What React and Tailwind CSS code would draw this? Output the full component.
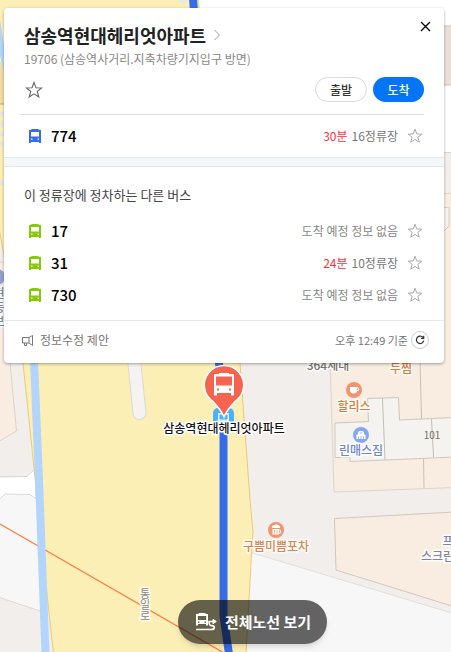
import React from 'react';

const otherBuses = [
  { number: '17' },
  { number: '31', minutes: '24분', stops: '10정류장' },
  { number: '730' },
];

function StarIcon({ className }) {
  return (
    <svg className={className} viewBox="0 0 16 16" fill="none" stroke="currentColor">
      <path
        strokeLinejoin="miter"
        d="M8 1.2l1.75 4.75 5.05.2-3.95 3.15 1.4 4.9L8 11.4l-4.25 2.8 1.4-4.9L1.2 6.15l5.05-.2z"
      />
    </svg>
  );
}

function BusIcon({ className }) {
  return (
    <svg className={className} viewBox="0 0 12 14" fill="currentColor">
      <path
        fillRule="evenodd"
        d="M2.5 0h7v.8h1.7c.4 0 .8.4.8.8V14H10v-1H2v1H0V1.6C0 1.2.4.8.8.8h1.7zM2 3v4.500h8V3zM2 9.500v1.300h1.500V9.500zM8.500 9.500v1.300H10V9.500z"
      />
    </svg>
  );
}

function StarButton() {
  return (
    <button type="button" aria-label="즐겨찾기" className="text-[#aaa]">
      <StarIcon className="h-4 w-4" />
    </button>
  );
}

function BusRow({ number, minutes, stops, color, className }) {
  return (
    <li className={`flex items-center pr-[21px] pl-[25px] ${className}`}>
      <BusIcon className={`h-[14px] w-3 ${color}`} />
      <a href="#bus" className="ml-[10px] text-[15px] font-medium text-black">
        {number}
      </a>
      <span className="mr-[9px] ml-auto flex gap-1 text-xs text-[#888]">
        {minutes ? (
          <>
            <span className="text-[#f5333f]">{minutes}</span>
            <span className="text-[#777]">{stops}</span>
          </>
        ) : (
          '도착 예정 정보 없음'
        )}
      </span>
      <StarButton />
    </li>
  );
}

function MapLabel({ x, y, className, children }) {
  return (
    <text
      x={x}
      y={y}
      textAnchor="middle"
      strokeWidth="3"
      strokeLinejoin="round"
      className={`stroke-white/80 text-xs font-medium [paint-order:stroke] ${className}`}
    >
      {children}
    </text>
  );
}

function MapView() {
  return (
    <svg
      className="absolute inset-0 h-full w-full"
      viewBox="0 0 451 652"
      preserveAspectRatio="xMidYMin slice"
    >
      <rect width="451" height="652" fill="#f1eeec" />

      {/* ground on the right of the road */}
      <path d="M190 0H451V153H215z" fill="#fff" />
      <path d="M440 26H455V85H440z" fill="#e9dfd7" stroke="#cfc3bb" />
      <path d="M440 152.500H451" stroke="#d9d5d0" />
      <path d="M246 551L455 614V656H240z" fill="#f7f7f7" stroke="#e3dfda" />
      <path d="M440 193.500H455V487.500L334 492L330 360H440z" fill="#f9ece1" stroke="#dfd3c9" />
      <path d="M440 207.500H449V226L440 235z" fill="#f4f3ef" stroke="#d5cfc8" />
      <path d="M420 360L421.500 419M423.500 458L424 488" fill="none" stroke="#c9c1b8" />
      <path
        d="M335 423L368.500 421.500L367.500 398.500L398.500 397.500L399.500 420L455 417.500V457L350 461.500V457.500H335z"
        fill="#f4f3ef"
        stroke="#cdc8bf"
      />
      <path d="M382.500 398L385 460M431.500 419L433.500 457" fill="none" stroke="#c4bfb5" />
      <path d="M334.500 518.500L455 512V607L336 570z" fill="#f9ece1" stroke="#d3c8be" />

      {/* ground on the left of the road */}
      <path d="M-2 262H10V363L16.500 431L-2 442z" fill="#f9ece1" stroke="#dfd3c9" />
      <path d="M-2 477L27 476.500L36 468V500H-2z" fill="#fff" stroke="#d8d4ce" />
      <path d="M-2 501L5 494L30 494.500L38 500L46 613L-2 597z" fill="#f7f7f7" stroke="#dedad5" />

      {/* road */}
      <path
        d="M-2 -2H198L240 363L250 500L253 532L252 545L246 654H53.500L46 585L34 468L23 363L-2 222z"
        fill="#fcefb6"
        stroke="#ebcb78"
      />
      <path d="M0 20L4 45V75L0 55z" fill="#b3d5fc" />
      <path d="M0 60L5 76V104H0z" fill="#f2dca3" />
      <path d="M0 104H5" stroke="#b8a888" />
      <path
        d="M0 114h4M0 124h4M0 134h4M0 144h4M0 183h4"
        stroke="#e9e6df"
        strokeWidth="5"
      />
      <path d="M177 0H190L183 4z" fill="#eae8e2" />
      <path d="M132 340L139.500 413" stroke="#dddad2" strokeWidth="14" strokeLinecap="round" />
      <path d="M132 340L139.500 413" stroke="#f4f3ef" strokeWidth="12" strokeLinecap="round" />
      <path d="M0 524L224 653" stroke="#ff7f45" strokeWidth="1.300" />
      <path d="M34 360L39 480L42 560L45.500 654" fill="none" stroke="#b3d5fc" strokeWidth="8" />

      {/* bus route */}
      <path
        d="M193 -2L219 363L223.500 400V616L229 654"
        fill="none"
        stroke="#376ce7"
        strokeWidth="8"
      />

      {/* places */}
      <circle cx="-3" cy="277" r="8" fill="#8f9fd0" />
      <MapLabel x="-1" y="298" className="fill-[#7d88a8]">현</MapLabel>
      <MapLabel x="-1" y="312" className="fill-[#7d88a8]">동</MapLabel>
      <MapLabel x="-1" y="326" className="fill-[#7d88a8]">보</MapLabel>
      <MapLabel x="328" y="370" className="fill-[#77706b]">364세대</MapLabel>
      <MapLabel x="401" y="373" className="fill-[#d17f3e]">두찜</MapLabel>

      <circle cx="354" cy="390" r="8" fill="#ed9772" />
      <path d="M350 387h7v3.500c0 2-1 3-3.500 3s-3.500-1-3.500-3z" fill="#fff" />
      <path d="M357 388h1.500v2.500H357" fill="none" stroke="#fff" />
      <MapLabel x="354" y="411" className="fill-[#d17f3e]">할리스</MapLabel>

      <circle cx="361" cy="435" r="8" fill="#86a7f0" />
      <path d="M356.500 439v-4.500h1.500V432l1.500-1h3l1.500 1v2.500h1.500v4.500z" fill="#fff" />
      <path d="M359.500 433h3M358.500 436.500v2.500M361 436v3M363.500 436.500v2.500" stroke="#86a7f0" strokeWidth=".8" />
      <MapLabel x="361" y="455" className="fill-[#6f87c6]">린매스짐</MapLabel>

      <text x="432" y="439" textAnchor="middle" className="fill-[#77706b] text-[10px]">
        101
      </text>

      <circle cx="276" cy="530" r="8" fill="#ed9772" />
      <path d="M272 528c-.500-2 1-3 2-2.500 1-1.500 4-1.500 4.500 0 1.500 0 2 1 1.500 2.500zM272.500 529h6.500v5.500h-6.500z" fill="#fff" />
      <path d="M279 530h1.500v3H279" fill="none" stroke="#fff" />
      <path d="M274.500 530v3.500M277 530v3.500" stroke="#ed9772" strokeWidth=".8" />
      <MapLabel x="276" y="551" className="fill-[#d1884e]">구쁨미쁨포차</MapLabel>

      <MapLabel x="448" y="546" className="fill-[#7d88a8]">프</MapLabel>
      <MapLabel x="443" y="561" className="fill-[#7d88a8]">스크린골</MapLabel>
      <text
        x="145"
        y="588"
        strokeWidth="3"
        className="fill-[#8a857c] stroke-white/80 text-[11px] [paint-order:stroke] [text-orientation:upright] [writing-mode:vertical-rl]"
      >
        통일로
      </text>

      {/* selected stop */}
      <rect x="213" y="408" width="21" height="22" rx="5" fill="#4db0fa" />
      <path d="M218 413h11v11h-11z" fill="#e4f3ff" />
      <path d="M220 415h7v4h-7zM220 421h1.500M225.500 421h1.500" fill="#4db0fa" stroke="#4db0fa" />
      <path
        d="M224 417c-2-6-6-10-11-15.500A19.700 19.700 0 1 1 235 401.500C230 407 226 411 224 417z"
        fill="#f46450"
        stroke="#fff"
        strokeWidth="1.500"
      />
      <path
        fillRule="evenodd"
        fill="#fff"
        d="M219 373h10v1h4c.600 0 1 .400 1 1v20.500h-3V393h-14v2.500h-3V375c0-.600.400-1 1-1h4zM216 376.500v9h16v-9zM217 388.500v2h2v-2zM229 388.500v2h2v-2z"
      />
      <text
        x="224"
        y="433"
        textAnchor="middle"
        strokeWidth="3"
        strokeLinejoin="round"
        className="fill-[#111] stroke-white text-xs font-medium [paint-order:stroke]"
      >
        삼송역현대헤리엇아파트
      </text>
    </svg>
  );
}

function StopPanel() {
  return (
    <section className="relative mr-[3px] rounded-[4px] bg-white shadow-[0_1px_3px_rgba(0,0,0,0.35)]">
      <button type="button" aria-label="닫기" className="absolute top-[13px] right-[13px] text-black">
        <svg className="h-[11px] w-[11px]" viewBox="0 0 11 11" stroke="currentColor" strokeWidth="1.300">
          <path d="M1 1l9 9M10 1l-9 9" />
        </svg>
      </button>

      <header className="mr-5 ml-4 border-b border-[#dcdcdc] pt-[13px] pb-3 pl-1">
        <h1 className="text-lg leading-7 font-bold text-[#222]">
          <a href="#stop" className="flex items-center gap-2">
            삼송역현대헤리엇아파트
            <svg className="h-3 w-[6px]" viewBox="0 0 6 12" fill="none" stroke="#999">
              <path d="M.5 1l5 5-5 5" />
            </svg>
          </a>
        </h1>
        <p className="text-xs leading-5 text-[#888]">19706 (삼송역사거리.지축차량기지입구 방면)</p>
        <div className="mt-2 flex items-center gap-[6px] text-xs font-medium">
          <button type="button" aria-label="즐겨찾기" className="mr-auto ml-px text-[#666]">
            <StarIcon className="h-[18px] w-[18px]" />
          </button>
          <button type="button" className="h-[25px] w-[52px] rounded-full border border-[#d9d9d9] text-[#333]">
            출발
          </button>
          <button type="button" className="h-[25px] w-[51px] rounded-full bg-[#0475f4] text-white">
            도착
          </button>
        </div>
      </header>

      <ul>
        <BusRow number="774" minutes="30분" stops="16정류장" color="text-[#376ce7]" className="h-[42px]" />
      </ul>

      <div className="h-[10px] border-y border-[#e3e8ee] bg-[#f4f6fa]" />

      <div className="pt-[18px] pb-[9px]">
        <h2 className="mb-[10px] ml-5 text-[13px] leading-5 text-[#444]">이 정류장에 정차하는 다른 버스</h2>
        <ul>
          {otherBuses.map((bus) => (
            <BusRow key={bus.number} {...bus} color="text-[#88c808]" className="h-8" />
          ))}
        </ul>
      </div>

      <footer className="flex h-[43px] items-center border-t border-[#e8e8e8] pr-[15px] pb-1 pl-[18px] text-[#777]">
        <button type="button" className="flex items-center gap-[7px] text-xs">
          <svg className="h-[11px] w-[11px]" viewBox="0 0 11 11" fill="none" stroke="currentColor">
            <path d="M7 2.500H.5v5.500H7M7 2.500l3.500-2v10L7 8zM2.500 8v2.500H4.500V8" />
          </svg>
          정보수정 제안
        </button>
        <span className="mr-[3px] ml-auto text-[11px]">오후 12:49 기준</span>
        <button
          type="button"
          aria-label="새로고침"
          className="flex h-[18px] w-[18px] items-center justify-center rounded-full border border-[#ccc] text-[#333]"
        >
          <svg className="h-[10px] w-[10px]" viewBox="0 0 10 10" fill="none" stroke="currentColor" strokeWidth="1.200">
            <path d="M8.300 3A3.700 3.700 0 1 0 8.700 5.600M8.700.800v2.700H6" />
          </svg>
        </button>
      </footer>
    </section>
  );
}

export default function App() {
  return (
    <main className="relative flex min-h-screen flex-col justify-between overflow-hidden px-1 pt-2 pb-2 font-['Noto_Sans_CJK_KR',sans-serif]">
      <MapView />
      <StopPanel />
      <div className="relative flex justify-center pl-[54px]">
        <button
          type="button"
          className="flex h-11 items-center gap-2 rounded-full bg-black/60 pr-4 pl-[18px] text-[15px] font-bold text-white shadow-md"
        >
          <svg className="h-[18px] w-[21px]" viewBox="0 0 21 18" fill="none" stroke="currentColor">
            <path
              fill="currentColor"
              stroke="none"
              fillRule="evenodd"
              d="M2.500 0h7v1H12v11.500h-2V11H2v1.500H0V1h2.500zM1.800 3v4h8.400V3zM2 8.500v1.200h1.500V8.500zM8.500 8.500v1.200H10V8.500z"
            />
            <path
              strokeWidth="1.700"
              d="M0 16.500h15c2 0 3.300-.700 3.300-2s-1.300-1.800-3-1.800M12.500 8.500h5"
            />
            <path fill="currentColor" d="M17 6.300l3.300 2.200-3.300 2.200z" />
            <path strokeWidth="1.500" d="M13 8.500c0 2.500.800 4.200 2.800 4.200" />
          </svg>
          전체노선 보기
        </button>
      </div>
    </main>
  );
}
